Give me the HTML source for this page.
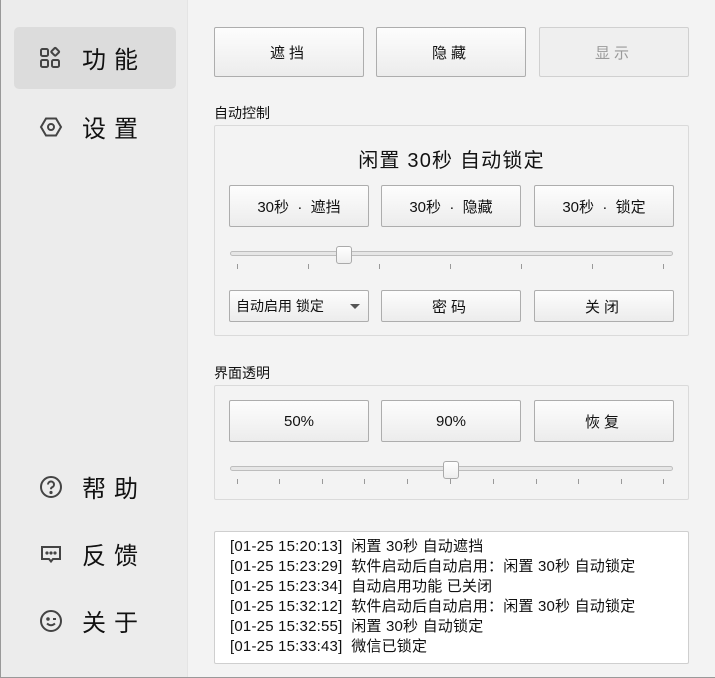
<!DOCTYPE html>
<html><head><meta charset="utf-8"><style>
*{margin:0;padding:0;box-sizing:border-box}
body{width:715px;height:678px;background:#f3f3f3;font-family:"Liberation Sans","Noto Sans CJK SC",sans-serif;color:#111;position:relative;overflow:hidden}
.frame{position:absolute;left:0;top:0;width:715px;height:678px;border-left:1px solid #999;border-bottom:1px solid #999;pointer-events:none}
.side{position:absolute;left:1px;top:0;width:187px;height:677px;background:#ececec;border-right:1px solid #e4e4e4}
.nav{position:absolute;left:13px;width:162px;height:62px;display:flex;align-items:center;font-size:24px;letter-spacing:8px}
.nav svg{position:absolute;left:25px}
.nav span{position:absolute;left:68px;top:13px}
.sel{background:#dcdcdc;border-radius:5px}
.btn{position:absolute;border:1px solid #adadad;border-radius:2px;background:linear-gradient(#fdfdfd,#ececec);display:flex;align-items:center;justify-content:center;font-size:15px}
.dis{color:#9a9a9a;border-color:#d0d0d0;background:#efefef}
.lbl{position:absolute;font-size:14px}
.grp{position:absolute;border:1px solid #dadada;border-radius:2px}
.track{position:absolute;height:5px;border:1px solid #bdbdbd;border-radius:3px;background:#e6e6e6}
.handle{position:absolute;width:16px;height:18px;border:1px solid #aaa;border-radius:3px;background:linear-gradient(#fff,#eee)}
.tick{position:absolute;width:1px;height:5px;background:#999}
.log{position:absolute;left:214px;top:531px;width:475px;height:133px;background:#fff;border:1px solid #cfcfcf;border-radius:2px;padding:5px 0 0 15px;font-size:15px;letter-spacing:0.2px;line-height:20px}
</style></head><body>
<div class="side">
<div class="nav sel" style="top:27px"><svg width="24" height="24" viewBox="0 0 24 24" fill="none" stroke="#444" stroke-width="2"><rect x="2" y="3" width="7" height="7" rx="1.5"/><rect x="2" y="14" width="7" height="7" rx="1.5"/><rect x="13" y="14" width="7" height="7" rx="1.5"/><rect x="12.5" y="2.5" width="6" height="6" rx="1" transform="rotate(45 15.5 6.5)"/></svg><span>功能</span></div>
<div class="nav" style="top:96px"><svg width="24" height="24" viewBox="0 0 24 24" fill="none" stroke="#444" stroke-width="2"><path d="M7 3.5h10l5 8.5-5 8.5H7L2 12z"/><circle cx="12" cy="12" r="3"/></svg><span>设置</span></div>
<div class="nav" style="top:456px"><svg width="24" height="24" viewBox="0 0 24 24" fill="none" stroke="#444" stroke-width="2"><circle cx="12" cy="12" r="10"/><path d="M9 9.5a3 3 0 1 1 4 2.8c-.8.4-1 1-1 2"/><circle cx="12" cy="17.5" r=".6" fill="#444"/></svg><span>帮助</span></div>
<div class="nav" style="top:523px"><svg width="24" height="24" viewBox="0 0 24 24" fill="none" stroke="#444" stroke-width="2"><path d="M3 5h18v12h-7l-2 2.5-2-2.5H3z"/><circle cx="8" cy="11" r=".6" fill="#444"/><circle cx="12" cy="11" r=".6" fill="#444"/><circle cx="16" cy="11" r=".6" fill="#444"/></svg><span>反馈</span></div>
<div class="nav" style="top:590px"><svg width="24" height="24" viewBox="0 0 24 24" fill="none" stroke="#444" stroke-width="2"><circle cx="12" cy="12" r="10"/><circle cx="9" cy="10" r=".8" fill="#444"/><path d="M14 10h3"/><path d="M8 14.5q4 3.5 8 0"/></svg><span>关于</span></div>
</div>

<div class="btn" style="left:214px;top:27px;width:150px;height:50px;letter-spacing:4px">遮挡</div>
<div class="btn" style="left:376px;top:27px;width:150px;height:50px;letter-spacing:4px">隐藏</div>
<div class="btn dis" style="left:539px;top:27px;width:150px;height:50px;letter-spacing:4px">显示</div>

<div class="lbl" style="left:214px;top:103px">自动控制</div>
<div class="grp" style="left:214px;top:125px;width:475px;height:211px"></div>
<div style="position:absolute;left:214px;width:475px;top:144px;text-align:center;font-size:20px;letter-spacing:1.2px">闲置 30秒 自动锁定</div>
<div class="btn" style="left:229px;top:185px;width:140px;height:42px">30秒 &nbsp;·&nbsp; 遮挡</div>
<div class="btn" style="left:381px;top:185px;width:140px;height:42px">30秒 &nbsp;·&nbsp; 隐藏</div>
<div class="btn" style="left:534px;top:185px;width:140px;height:42px">30秒 &nbsp;·&nbsp; 锁定</div>
<div class="track" style="left:230px;top:251px;width:443px"></div>
<div class="handle" style="left:336px;top:246px"></div>
<div class="tick" style="left:237px;top:264px"></div><div class="tick" style="left:308px;top:264px"></div><div class="tick" style="left:379px;top:264px"></div><div class="tick" style="left:450px;top:264px"></div><div class="tick" style="left:521px;top:264px"></div><div class="tick" style="left:592px;top:264px"></div><div class="tick" style="left:663px;top:264px"></div>
<div class="btn" style="left:229px;top:290px;width:140px;height:32px;justify-content:flex-start;padding-left:6px;font-size:14px">自动启用 锁定<svg style="position:absolute;right:8px;top:13px" width="10" height="6"><path d="M0 0h10L5 5z" fill="#555"/></svg></div>
<div class="btn" style="left:381px;top:290px;width:140px;height:32px;letter-spacing:4px">密码</div>
<div class="btn" style="left:534px;top:290px;width:140px;height:32px;letter-spacing:4px">关闭</div>

<div class="lbl" style="left:214px;top:363px">界面透明</div>
<div class="grp" style="left:214px;top:385px;width:475px;height:115px"></div>
<div class="btn" style="left:229px;top:400px;width:140px;height:42px">50%</div>
<div class="btn" style="left:381px;top:400px;width:140px;height:42px">90%</div>
<div class="btn" style="left:534px;top:400px;width:140px;height:42px;letter-spacing:4px">恢复</div>
<div class="track" style="left:230px;top:466px;width:443px"></div>
<div class="handle" style="left:443px;top:461px"></div>
<div class="tick" style="left:237px;top:479px"></div><div class="tick" style="left:279px;top:479px"></div><div class="tick" style="left:322px;top:479px"></div><div class="tick" style="left:364px;top:479px"></div><div class="tick" style="left:407px;top:479px"></div><div class="tick" style="left:450px;top:479px"></div><div class="tick" style="left:493px;top:479px"></div><div class="tick" style="left:536px;top:479px"></div><div class="tick" style="left:578px;top:479px"></div><div class="tick" style="left:621px;top:479px"></div><div class="tick" style="left:663px;top:479px"></div>

<div class="log">
<div>[01-25 15:20:13]&nbsp; 闲置 30秒 自动遮挡</div>
<div>[01-25 15:23:29]&nbsp; 软件启动后自动启用：闲置 30秒 自动锁定</div>
<div>[01-25 15:23:34]&nbsp; 自动启用功能 已关闭</div>
<div>[01-25 15:32:12]&nbsp; 软件启动后自动启用：闲置 30秒 自动锁定</div>
<div>[01-25 15:32:55]&nbsp; 闲置 30秒 自动锁定</div>
<div>[01-25 15:33:43]&nbsp; 微信已锁定</div>
</div>
<div class="frame"></div>
</body></html>
